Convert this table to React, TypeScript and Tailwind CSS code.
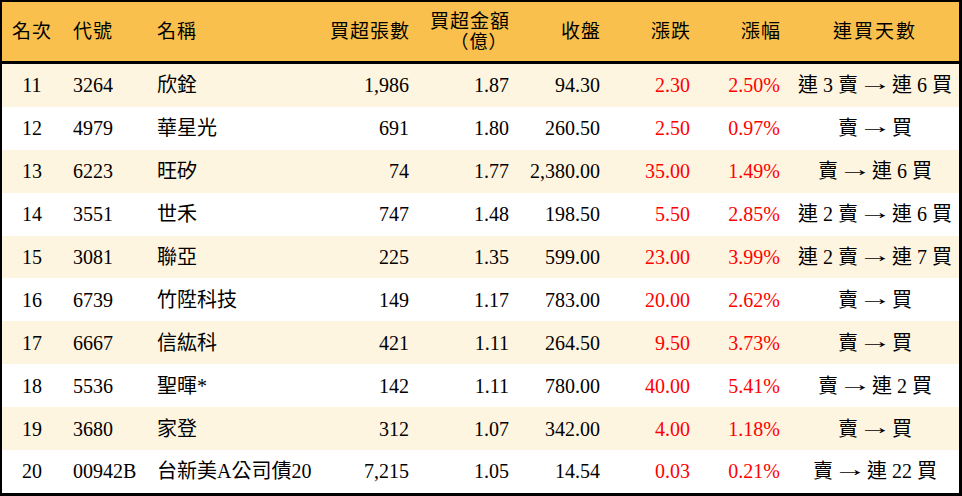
import React from "react";

type Row = {
  rank: string;
  code: string;
  name: string;
  vol: string;
  amt: string;
  close: string;
  chg: string;
  pct: string;
  from: string;
  to: string;
};

const rows: Row[] = [
  { rank: "11", code: "3264", name: "欣銓", vol: "1,986", amt: "1.87", close: "94.30", chg: "2.30", pct: "2.50%", from: "連 3 賣", to: "連 6 買" },
  { rank: "12", code: "4979", name: "華星光", vol: "691", amt: "1.80", close: "260.50", chg: "2.50", pct: "0.97%", from: "賣", to: "買" },
  { rank: "13", code: "6223", name: "旺矽", vol: "74", amt: "1.77", close: "2,380.00", chg: "35.00", pct: "1.49%", from: "賣", to: "連 6 買" },
  { rank: "14", code: "3551", name: "世禾", vol: "747", amt: "1.48", close: "198.50", chg: "5.50", pct: "2.85%", from: "連 2 賣", to: "連 6 買" },
  { rank: "15", code: "3081", name: "聯亞", vol: "225", amt: "1.35", close: "599.00", chg: "23.00", pct: "3.99%", from: "連 2 賣", to: "連 7 買" },
  { rank: "16", code: "6739", name: "竹陞科技", vol: "149", amt: "1.17", close: "783.00", chg: "20.00", pct: "2.62%", from: "賣", to: "買" },
  { rank: "17", code: "6667", name: "信紘科", vol: "421", amt: "1.11", close: "264.50", chg: "9.50", pct: "3.73%", from: "賣", to: "買" },
  { rank: "18", code: "5536", name: "聖暉*", vol: "142", amt: "1.11", close: "780.00", chg: "40.00", pct: "5.41%", from: "賣", to: "連 2 買" },
  { rank: "19", code: "3680", name: "家登", vol: "312", amt: "1.07", close: "342.00", chg: "4.00", pct: "1.18%", from: "賣", to: "買" },
  { rank: "20", code: "00942B", name: "台新美A公司債20", vol: "7,215", amt: "1.05", close: "14.54", chg: "0.03", pct: "0.21%", from: "賣", to: "連 22 買" },
];

const cols = "grid grid-cols-[60px_88px_170px_100px_100px_91px_90px_90px_168px]";

export default function App() {
  return (
    <div
      className="w-[962px] h-[496px] bg-white border-t-2 border-l-2 border-r-[3px] border-b-[3px] border-black text-[20px] text-black leading-none"
      style={{ fontFamily: '"Liberation Serif", "Noto Sans CJK TC", serif' }}
    >
      <div className={`${cols} h-[62px] bg-[#f9c04e] border-b-[3px] border-black items-center`}>
        <div className="text-center tracking-[1px] text-[19px]">名次</div>
        <div className="pl-[11px] tracking-[1px] text-[19px]">代號</div>
        <div className="pl-[7px] tracking-[1px] text-[19px]">名稱</div>
        <div className="text-right pr-[10px] tracking-[1px] text-[19px]">買超張數</div>
        <div className="text-right pr-[10px] text-[19px]">
          <span className="inline-block text-center leading-[20px] tracking-[1px]">
            <span className="block">買超金額</span>
            <span className="block pl-[18px] text-[18px]">（億）</span>
          </span>
        </div>
        <div className="text-right pr-[10px] tracking-[1px] text-[19px]">收盤</div>
        <div className="text-right pr-[10px] tracking-[1px] text-[19px]">漲跌</div>
        <div className="text-right pr-[10px] tracking-[1px] text-[19px]">漲幅</div>
        <div className="text-center tracking-[2px] text-[19px]">連買天數</div>
      </div>
      {rows.map((r, i) => (
        <div
          key={r.rank}
          className={`${cols} h-[42.9px] items-center ${i % 2 === 0 ? "bg-[#fef5e1]" : "bg-white"}`}
        >
          <div className="text-center">{r.rank}</div>
          <div className="pl-[11px]">{r.code}</div>
          <div className="pl-[7px] whitespace-nowrap">{r.name}</div>
          <div className="text-right pr-[11px]">{r.vol}</div>
          <div className="text-right pr-[11px]">{r.amt}</div>
          <div className="text-right pr-[11px] whitespace-nowrap">{r.close}</div>
          <div className="text-right pr-[11px] text-[#ff0000]">{r.chg}</div>
          <div className="text-right pr-[11px] text-[#ff0000]">{r.pct}</div>
          <div className="flex items-center justify-center whitespace-nowrap">
            <span>{r.from}</span>
            <span className="inline-block w-[34px] text-center scale-x-[1.7] -translate-y-[2px]">→</span>
            <span>{r.to}</span>
          </div>
        </div>
      ))}
    </div>
  );
}
